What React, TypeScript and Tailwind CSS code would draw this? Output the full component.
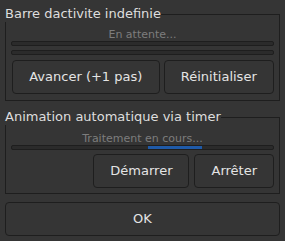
import React from 'react'

const font = { fontFamily: '"DejaVu Sans", "Liberation Sans", sans-serif' }

function Bar({ busy }: { busy?: boolean }) {
  return (
    <div className="flex h-[5px] rounded-[2px] border border-[#1e1e1e] bg-[#2b2b2b]">
      {busy && <div className="ml-[136px] h-full w-[54px] bg-[#1f5aa8]" />}
    </div>
  )
}

function Btn({ label, grow }: { label: string; grow?: boolean }) {
  return (
    <button
      className={`flex h-[34px] items-center justify-center whitespace-nowrap rounded-[4px] border border-[#1e1e1e] bg-[#353535] px-[16px] text-[13px] text-[#e4e4e4] ${grow ? 'flex-auto' : ''}`}
    >
      {label}
    </button>
  )
}

function Group({ title, top, children }: { title: string; top: string; children: React.ReactNode }) {
  return (
    <div className={`flex flex-col ${top}`}>
      <div className="relative z-10 h-[16px] self-start bg-[#353535] text-[13px] leading-[16px] text-[#dedede]">
        {title}
      </div>
      <div className="-mt-[8px] flex flex-col border border-[#1e1e1e]">{children}</div>
    </div>
  )
}

export default function App() {
  return (
    <div className="flex h-[241px] w-[285px] flex-col bg-[#353535] px-[5px] pt-[6px]" style={font}>
      <Group title="Barre dactivite indefinie" top="">
        <div className="flex flex-col px-[5px] pb-[6px] pt-[13px]">
          <div className="h-[13px] text-center text-[11px] leading-[13px] text-[#7d7d7d]">En attente...</div>
          <Bar />
          <div className="mt-[4px]">
            <Bar />
          </div>
          <div className="mt-[5px] flex gap-[4px] pl-[1px]">
            <Btn label="Avancer (+1 pas)" grow />
            <Btn label="Réinitialiser" grow />
          </div>
        </div>
      </Group>
      <Group title="Animation automatique via timer" top="mt-[8px]">
        <div className="flex flex-col px-[5px] pb-[5px] pt-[14px]">
          <div className="h-[13px] text-center text-[11px] leading-[13px] text-[#7d7d7d]">Traitement en cours...</div>
          <Bar busy />
          <div className="mt-[4px] flex justify-end gap-[5px]">
            <Btn label="Démarrer" />
            <Btn label="Arrêter" />
          </div>
        </div>
      </Group>
      <button className="mt-[8px] flex h-[34px] items-center justify-center rounded-[4px] border border-[#1e1e1e] bg-[#353535] text-[13px] text-[#e4e4e4]">
        OK
      </button>
    </div>
  )
}
